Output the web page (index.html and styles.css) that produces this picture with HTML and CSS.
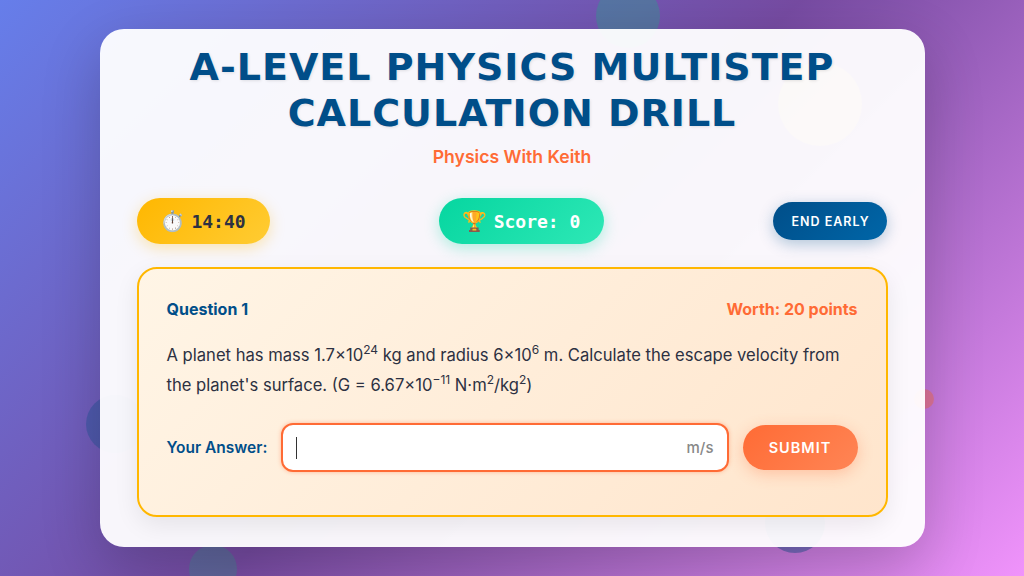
FILE: index.html
```html
<!DOCTYPE html>
<html lang="en">
<head>
<meta charset="utf-8">
<title>A-Level Physics Multistep Calculation Drill</title>
<link rel="stylesheet" href="styles.css">
</head>
<body>
<div class="bubble b-teal"></div>
<div class="bubble b-yellow"></div>
<div class="bubble b-left"></div>
<div class="bubble b-pink"></div>
<div class="bubble b-bl"></div>
<div class="bubble b-br"></div>
<main class="card">
  <h1 class="title">A-LEVEL PHYSICS MULTISTEP<br>CALCULATION DRILL</h1>
  <p class="author">Physics With Keith</p>
  <div class="controls">
    <div class="pill timer"><span class="emoji">⏱️</span> 14:40</div>
    <div class="pill score"><span class="emoji">🏆</span> Score: 0</div>
    <button class="end">END EARLY</button>
  </div>
  <section class="question">
    <div class="q-head">
      <span class="q-num">Question 1</span>
      <span class="q-worth">Worth: 20 points</span>
    </div>
    <p class="q-text">A planet has mass 1.7×10<sup>24</sup> kg and radius 6×10<sup>6</sup> m. Calculate the escape velocity from the planet's surface. (G = 6.67×10<sup>−11</sup> N·m<sup>2</sup>/kg<sup>2</sup>)</p>
    <div class="answer">
      <label class="a-label">Your Answer:</label>
      <div class="field"><span class="caret"></span><span class="unit">m/s</span></div>
      <button class="submit">SUBMIT</button>
    </div>
  </section>
</main>
</body>
</html>
```
FILE: styles.css
```css
* { box-sizing: border-box; }
html, body { height: 100%; }
body {
  margin: 0;
  height: 576px;
  overflow: hidden;
  position: relative;
  display: flex;
  justify-content: center;
  align-items: center;
  padding-right: 0;
  font-family: Inter, "Noto Sans", sans-serif;
  background: linear-gradient(135deg, #667eea 0%, #764ba2 50%, #f093fb 100%);
}
.bubble { position: absolute; border-radius: 50%; }
.b-teal { left: 596px; top: -16px; width: 64px; height: 64px; background: rgba(46, 160, 140, .4); }
.b-yellow { left: 778px; top: 62px; width: 84px; height: 84px; background: rgba(255, 200, 60, .4); }
.b-left { left: 86px; top: 395px; width: 58px; height: 58px; background: rgba(0, 78, 137, .3); }
.b-pink { left: 914px; top: 389px; width: 20px; height: 20px; background: rgba(255, 107, 53, .4); }
.b-bl { left: 189px; top: 545px; width: 48px; height: 48px; background: rgba(46, 160, 140, .3); }
.b-br { left: 765px; top: 493px; width: 60px; height: 60px; background: rgba(0, 78, 137, .4); }
.card {
  position: relative;
  width: 825px;
  height: 518px;
  padding: 15px 37px 0;
  border-radius: 24px;
  background: rgba(255, 255, 255, .95);
  box-shadow: 0 20px 60px rgba(0, 0, 0, .2);
}
.title {
  margin: 0;
  text-align: center;
  font-family: "DejaVu Sans", sans-serif;
  font-size: 38px;
  line-height: 46px;
  font-weight: 700;
  letter-spacing: 1px;
  color: #004e89;
  text-shadow: 1px 1px 3px rgba(0, 0, 0, .1);
}
.author {
  margin: 8px 0 0;
  text-align: center;
  font-size: 17.6px;
  line-height: 26px;
  font-weight: 600;
  color: #ff6b35;
}
.controls {
  margin-top: 28px;
  height: 46px;
  display: flex;
  justify-content: space-between;
  align-items: center;
}
.pill {
  height: 46px;
  padding: 0 24px;
  border-radius: 23px;
  display: flex;
  align-items: center;
  gap: 6px;
  font-family: "DejaVu Sans Mono", monospace;
  font-size: 18px;
  font-weight: 700;
}
.emoji { font-family: "Noto Color Emoji", sans-serif; font-weight: 400; font-size: 20px; }
.timer {
  color: #2d3142;
  background: linear-gradient(135deg, #ffb700, #ffcc33);
  box-shadow: 0 4px 15px rgba(255, 183, 0, .3);
}
.score {
  color: #fff;
  background: linear-gradient(135deg, #06d6a0, #2ee8b6);
  box-shadow: 0 4px 15px rgba(6, 214, 160, .3);
}
.end {
  width: 114px;
  height: 38px;
  padding: 0;
  border: 0;
  border-radius: 19px;
  font-family: Inter, sans-serif;
  font-size: 12.5px;
  font-weight: 600;
  letter-spacing: 1px;
  color: #fff;
  background: linear-gradient(135deg, #004e89, #0066a8);
  box-shadow: 0 4px 15px rgba(0, 78, 137, .3);
}
.question {
  margin-top: 23px;
  height: 250px;
  padding: 28px 28px 0;
  border: 2.5px solid #ffb700;
  border-radius: 20px;
  background: linear-gradient(135deg, #fff5e6, #ffe5cc);
  box-shadow: 0 8px 25px rgba(0, 0, 0, .08);
}
.q-head {
  display: flex;
  justify-content: space-between;
  align-items: center;
  font-size: 16px;
  line-height: 24px;
  font-weight: 700;
}
.q-num { color: #004e89; }
.q-worth { color: #ff6b35; }
.q-text {
  margin: 19px 0 0;
  font-size: 16.6px;
  line-height: 30px;
  color: #2d3142;
}
.q-text sup { font-size: 12px; line-height: 0; }
.answer {
  margin-top: 23px;
  display: flex;
  align-items: center;
  gap: 14px;
}
.a-label {
  font-size: 15.5px;
  font-weight: 600;
  color: #004e89;
  white-space: nowrap;
}
.field {
  flex: 1;
  height: 49px;
  padding: 0 13px;
  display: flex;
  align-items: center;
  justify-content: space-between;
  background: #fff;
  border: 2px solid #ff6b35;
  border-radius: 12px;
  box-shadow: 0 0 4px rgba(255, 107, 53, .4);
}
.caret { width: 1px; height: 22px; background: #333; }
.unit { font-size: 15px; font-weight: 500; color: #888; }
.submit {
  width: 115px;
  height: 45px;
  padding: 0;
  border: 0;
  border-radius: 23px;
  font-family: Inter, sans-serif;
  font-size: 14.5px;
  font-weight: 600;
  letter-spacing: 1px;
  color: #fff;
  background: linear-gradient(135deg, #ff6b35, #ff8555);
  box-shadow: 0 4px 15px rgba(255, 107, 53, .3);
}
```
